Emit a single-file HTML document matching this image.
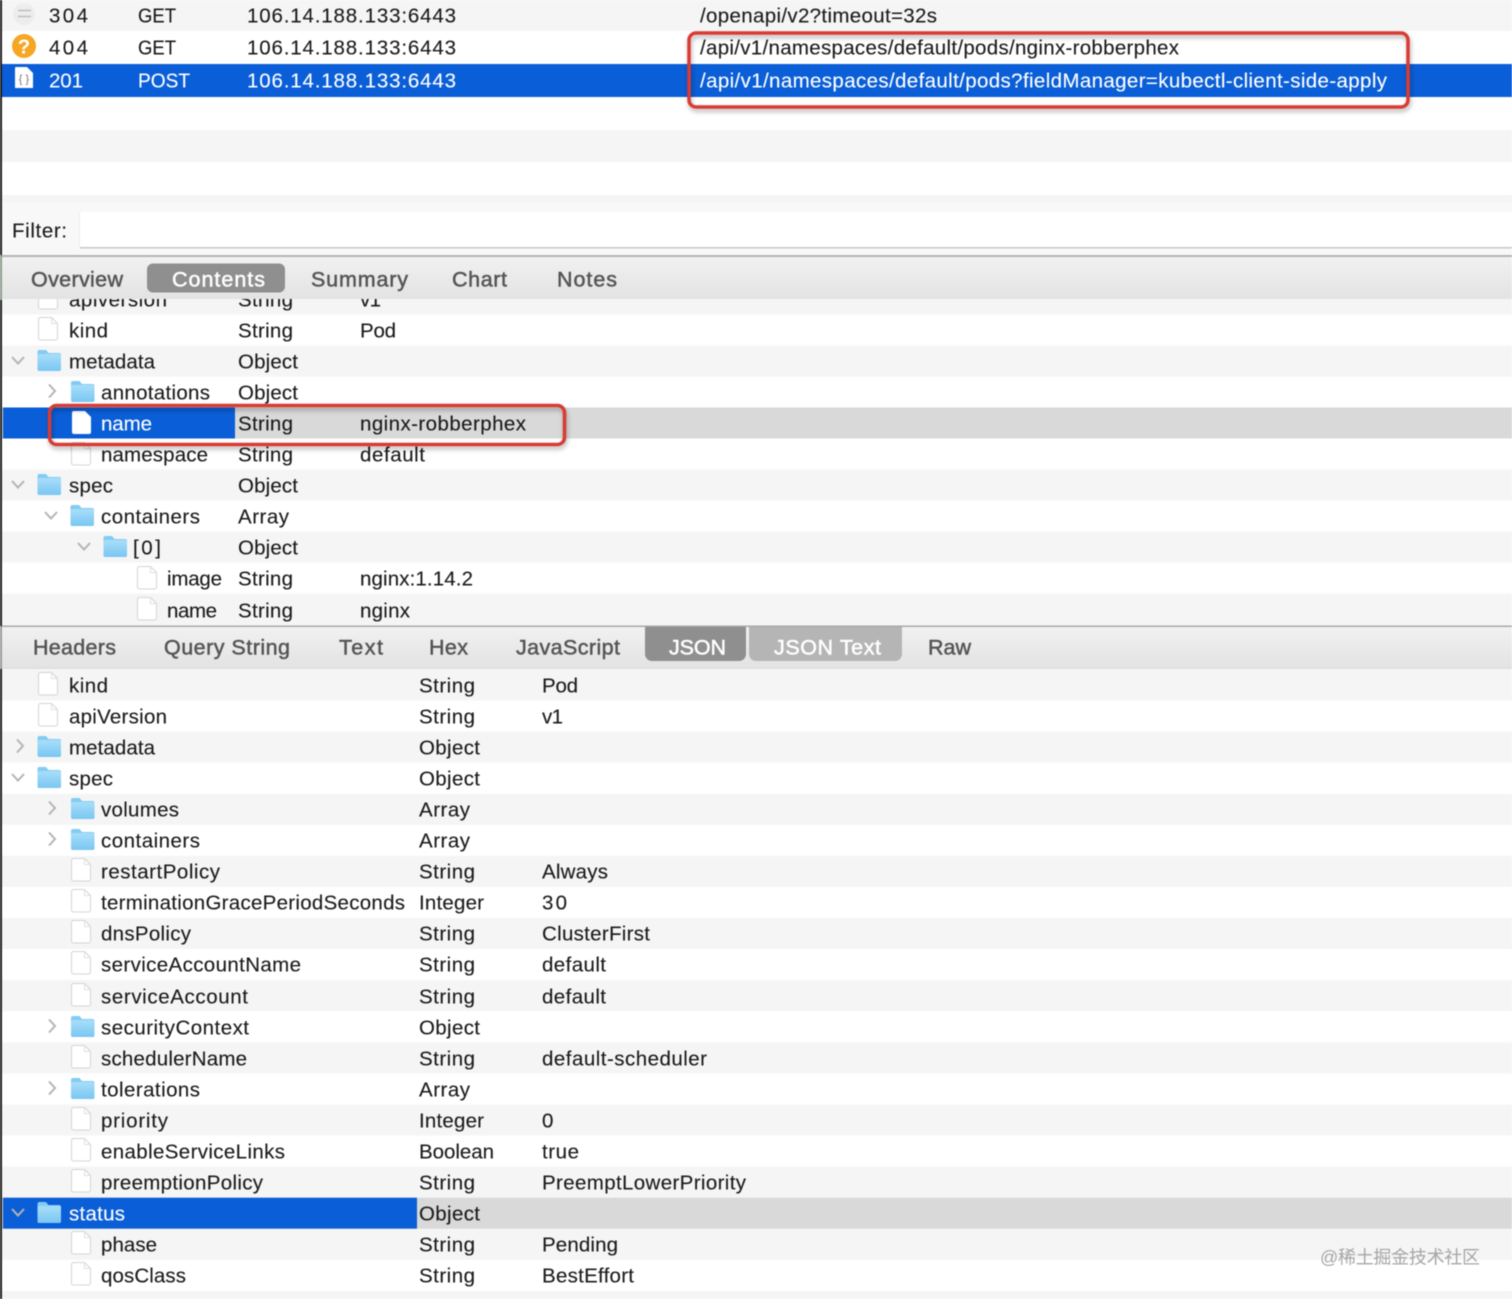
<!DOCTYPE html>
<html><head><meta charset="utf-8"><style>
html,body{margin:0;padding:0;background:#fff;width:1512px;height:1299px;overflow:hidden}
svg{display:block;filter:blur(.4px)}
text{font-family:"Liberation Sans","Noto Sans CJK SC",sans-serif;font-size:20.5px;fill:#1a1a1a;stroke:#1a1a1a;stroke-width:.12px;transform:translateY(.4px)}
.w{fill:#fff;stroke:#fff}
.t{fill:#555;stroke:#555;stroke-width:.5px;font-size:21.5px}
.tw{fill:#fff;stroke:#fff;stroke-width:.5px;font-size:21.5px}
.g{fill:#f5f5f5}
</style></head><body>
<svg xmlns="http://www.w3.org/2000/svg" width="1512" height="1299" viewBox="0 0 1512 1299">
<defs>
<linearGradient id="tb" x1="0" y1="0" x2="0" y2="1"><stop offset="0" stop-color="#f1f1f1"/><stop offset="1" stop-color="#e3e3e3"/></linearGradient>
<linearGradient id="fo" x1="0" y1="0" x2="0" y2="1"><stop offset="0" stop-color="#a9def9"/><stop offset="1" stop-color="#79c6f2"/></linearGradient>
<g id="file"><path d="M.5 2.500a2 2 0 0 1 2-2H13.500L19.500 6.500V21a2 2 0 0 1-2 2H2.500a2 2 0 0 1-2-2Z" fill="#fff" stroke="#d4d4d4"/><path d="M13.500.5V6.500H19.500" fill="none" stroke="#e0e0e0"/></g>
<g id="filew"><path d="M0 2a2 2 0 0 1 2-2H13L19 6V21a2 2 0 0 1-2 2H2a2 2 0 0 1-2-2Z" fill="#fff"/></g>
<g id="folder"><path d="M0 2a2 2 0 0 1 2-2H8.500L11 3H21.500a2 2 0 0 1 2 2V19a2 2 0 0 1-2 2H2a2 2 0 0 1-2-2Z" fill="#82ccf4"/><path d="M0 6a2 2 0 0 1 2-2H21.500a2 2 0 0 1 2 2V19a2 2 0 0 1-2 2H2a2 2 0 0 1-2-2Z" fill="url(#fo)"/></g>
<path id="cd" d="M-6-4L0 2.500L6-4" fill="none" stroke="#b4b4b4" stroke-width="2"/>
<path id="cr" d="M-3-6.500L3 0L-3 6.500" fill="none" stroke="#b4b4b4" stroke-width="2"/>
<filter id="sh" x="-5%" y="-20%" width="110%" height="150%"><feDropShadow dx="1" dy="3" stdDeviation="2.500" flood-color="#000" flood-opacity=".3"/></filter>
</defs>

<!-- top list -->
<rect class="g" y="0" width="1512" height="31"/>
<rect fill="#0a5ed7" y="64" width="1512" height="33"/>
<rect class="g" y="130" width="1512" height="32"/>
<rect class="g" y="195" width="1512" height="8"/>
<rect fill="#f8f8f8" y="203" width="1512" height="52"/>
<circle cx="24" cy="14" r="11" fill="#ededed"/><path d="M18 10.500H31M18 16.500H31" stroke="#bdbdbd" stroke-width="1.500"/>
<circle cx="24" cy="46" r="12" fill="#f5a623"/><text x="24" y="53" text-anchor="middle" class="w" style="font-size:20px;font-weight:bold">?</text>
<path d="M15 68a1 1 0 0 1 1-1H27L33 73V88H15Z" fill="#fff"/><text x="24" y="82" text-anchor="middle" style="font-size:11px;fill:#777;stroke:none">{ }</text>
<text x="49" y="22" textLength="39">304</text><text x="138" y="22" textLength="38" lengthAdjust="spacingAndGlyphs">GET</text><text x="247" y="22" textLength="209">106.14.188.133:6443</text><text x="700" y="22" textLength="237">/openapi/v2?timeout=32s</text>
<text x="49" y="54" textLength="39">404</text><text x="138" y="54" textLength="38" lengthAdjust="spacingAndGlyphs">GET</text><text x="247" y="54" textLength="209">106.14.188.133:6443</text><text x="700" y="54" textLength="479">/api/v1/namespaces/default/pods/nginx-robberphex</text>
<text class="w" x="49" y="87" textLength="34">201</text><text class="w" x="138" y="87" textLength="52" lengthAdjust="spacingAndGlyphs">POST</text><text class="w" x="247" y="87" textLength="209">106.14.188.133:6443</text><text class="w" x="700" y="87" textLength="687">/api/v1/namespaces/default/pods?fieldManager=kubectl-client-side-apply</text>

<!-- filter -->
<text x="12" y="237" textLength="55">Filter:</text>
<rect x="80" y="212" width="1432" height="35" fill="#fff"/><rect x="80" y="247" width="1432" height="1.500" fill="#c9c9c9"/><rect x="79" y="212" width="1" height="35" fill="#ececec"/>

<!-- contents rows -->
<rect class="g" y="283.500" width="1512" height="31"/>
<rect class="g" y="345.500" width="1512" height="31"/>
<rect fill="#d9d9d9" y="407.500" width="1512" height="31"/>
<rect fill="#0a5ed7" x="3" y="407.500" width="232" height="31"/>
<rect class="g" y="469.500" width="1512" height="31"/>
<rect class="g" y="531.500" width="1512" height="31"/>
<rect class="g" y="593.500" width="1512" height="33"/>

<use href="#file" x="38" y="286"/><text x="69" y="306" textLength="98">apiversion</text><text x="238" y="306" textLength="55">String</text><text x="360" y="306" textLength="21">v1</text>
<use href="#file" x="38" y="317"/><text x="69" y="337" textLength="39">kind</text><text x="238" y="337" textLength="55">String</text><text x="360" y="337" textLength="36">Pod</text>
<use href="#cd" x="18" y="361"/><use href="#folder" x="37.500" y="350"/><text x="69" y="368" textLength="86">metadata</text><text x="238" y="368" textLength="60">Object</text>
<use href="#cr" x="52" y="391"/><use href="#folder" x="71" y="381"/><text x="101" y="399" textLength="109">annotations</text><text x="238" y="399" textLength="60">Object</text>
<use href="#filew" x="72" y="411"/><text class="w" x="101" y="430" textLength="51">name</text><text x="238" y="430" textLength="55">String</text><text x="360" y="430" textLength="166">nginx-robberphex</text>
<use href="#file" x="71" y="442"/><text x="101" y="461" textLength="107">namespace</text><text x="238" y="461" textLength="55">String</text><text x="360" y="461" textLength="65">default</text>
<use href="#cd" x="18" y="485"/><use href="#folder" x="37.500" y="474"/><text x="69" y="492" textLength="44">spec</text><text x="238" y="492" textLength="60">Object</text>
<use href="#cd" x="51" y="516"/><use href="#folder" x="70.500" y="505"/><text x="101" y="523" textLength="99">containers</text><text x="238" y="523" textLength="51">Array</text>
<use href="#cd" x="84" y="547"/><use href="#folder" x="103.500" y="536"/><text x="133" y="554" textLength="28">[0]</text><text x="238" y="554" textLength="60">Object</text>
<use href="#file" x="137" y="566"/><text x="167" y="585" textLength="55">image</text><text x="238" y="585" textLength="55">String</text><text x="360" y="585" textLength="113">nginx:1.14.2</text>
<use href="#file" x="137" y="597"/><text x="167" y="617" textLength="50">name</text><text x="238" y="617" textLength="55">String</text><text x="360" y="617" textLength="50">nginx</text>

<!-- tabs 1 -->
<rect y="255" width="1512" height="2" fill="#b4b4b4"/>
<rect y="257" width="1512" height="42" fill="url(#tb)"/>
<rect x="147" y="263.500" width="138" height="29" rx="6" fill="#8f8f8f"/>
<text class="t" x="31" y="286" textLength="92">Overview</text>
<text class="tw" x="172" y="286" textLength="93">Contents</text>
<text class="t" x="311" y="286" textLength="97">Summary</text>
<text class="t" x="452" y="286" textLength="55">Chart</text>
<text class="t" x="557" y="286" textLength="60">Notes</text>

<!-- tabs 2 -->
<rect y="625.500" width="1512" height="1.500" fill="#a9a9a9"/>
<rect y="627" width="1512" height="41" fill="url(#tb)"/>
<rect y="668" width="1512" height="1" fill="#dadada"/>
<path d="M645 627H746V654a7 7 0 0 1-7 7H652a7 7 0 0 1-7-7Z" fill="#8f8f8f"/>
<path d="M749 627H902V654a7 7 0 0 1-7 7H756a7 7 0 0 1-7-7Z" fill="#b5b5b5"/>
<text class="t" x="33" y="654" textLength="83">Headers</text>
<text class="t" x="164" y="654" textLength="126">Query String</text>
<text class="t" x="339" y="654" textLength="44">Text</text>
<text class="t" x="429" y="654" textLength="39">Hex</text>
<text class="t" x="516" y="654" textLength="104">JavaScript</text>
<text class="tw" x="669" y="654" textLength="57">JSON</text>
<text class="tw" x="774" y="654" textLength="107">JSON Text</text>
<text class="t" x="928" y="654" textLength="43">Raw</text>

<!-- bottom rows -->
<rect class="g" y="669.500" width="1512" height="31"/>
<rect class="g" y="731.600" width="1512" height="31"/>
<rect class="g" y="793.800" width="1512" height="31"/>
<rect class="g" y="855.900" width="1512" height="31"/>
<rect class="g" y="918" width="1512" height="31"/>
<rect class="g" y="980.200" width="1512" height="31"/>
<rect class="g" y="1042.300" width="1512" height="31"/>
<rect class="g" y="1104.500" width="1512" height="31"/>
<rect class="g" y="1166.600" width="1512" height="31.100"/>
<rect fill="#d9d9d9" y="1197.700" width="1512" height="31.100"/>
<rect fill="#0a5ed7" x="3" y="1197.700" width="414" height="31.100"/>
<rect class="g" y="1228.800" width="1512" height="31.100"/>
<rect class="g" y="1291" width="1512" height="8"/>

<use href="#file" x="38" y="672"/><text x="69" y="692" textLength="39">kind</text><text x="419" y="692" textLength="56">String</text><text x="542" y="692" textLength="36">Pod</text>
<use href="#file" x="38" y="703"/><text x="69" y="723" textLength="98">apiVersion</text><text x="419" y="723" textLength="56">String</text><text x="542" y="723" textLength="21">v1</text>
<use href="#cr" x="20" y="746"/><use href="#folder" x="37.500" y="736"/><text x="69" y="754" textLength="86">metadata</text><text x="419" y="754" textLength="61">Object</text>
<use href="#cd" x="18" y="778"/><use href="#folder" x="37.500" y="767"/><text x="69" y="785" textLength="44">spec</text><text x="419" y="785" textLength="61">Object</text>
<use href="#cr" x="52" y="808"/><use href="#folder" x="71" y="798"/><text x="101" y="816" textLength="78">volumes</text><text x="419" y="816" textLength="51">Array</text>
<use href="#cr" x="52" y="839"/><use href="#folder" x="71" y="829"/><text x="101" y="847" textLength="99">containers</text><text x="419" y="847" textLength="51">Array</text>
<use href="#file" x="71" y="858"/><text x="101" y="878" textLength="119">restartPolicy</text><text x="419" y="878" textLength="56">String</text><text x="542" y="878" textLength="66">Always</text>
<use href="#file" x="71" y="889"/><text x="101" y="909" textLength="304">terminationGracePeriodSeconds</text><text x="419" y="909" textLength="65">Integer</text><text x="542" y="909" textLength="25">30</text>
<use href="#file" x="71" y="920"/><text x="101" y="940" textLength="90">dnsPolicy</text><text x="419" y="940" textLength="56">String</text><text x="542" y="940" textLength="108">ClusterFirst</text>
<use href="#file" x="71" y="951"/><text x="101" y="971" textLength="200">serviceAccountName</text><text x="419" y="971" textLength="56">String</text><text x="542" y="971" textLength="64">default</text>
<use href="#file" x="71" y="983"/><text x="101" y="1003" textLength="147">serviceAccount</text><text x="419" y="1003" textLength="56">String</text><text x="542" y="1003" textLength="64">default</text>
<use href="#cr" x="52" y="1026"/><use href="#folder" x="71" y="1016"/><text x="101" y="1034" textLength="148">securityContext</text><text x="419" y="1034" textLength="61">Object</text>
<use href="#file" x="71" y="1045"/><text x="101" y="1065" textLength="146">schedulerName</text><text x="419" y="1065" textLength="56">String</text><text x="542" y="1065" textLength="165">default-scheduler</text>
<use href="#cr" x="52" y="1088"/><use href="#folder" x="71" y="1078"/><text x="101" y="1096" textLength="99">tolerations</text><text x="419" y="1096" textLength="51">Array</text>
<use href="#file" x="71" y="1107"/><text x="101" y="1127" textLength="67">priority</text><text x="419" y="1127" textLength="65">Integer</text><text x="542" y="1127" textLength="12">0</text>
<use href="#file" x="71" y="1138"/><text x="101" y="1158" textLength="184">enableServiceLinks</text><text x="419" y="1158" textLength="75">Boolean</text><text x="542" y="1158" textLength="37">true</text>
<use href="#file" x="71" y="1169"/><text x="101" y="1189" textLength="162">preemptionPolicy</text><text x="419" y="1189" textLength="56">String</text><text x="542" y="1189" textLength="204">PreemptLowerPriority</text>
<use href="#cd" x="18" y="1213" style="stroke:#cfe0f7"/><use href="#folder" x="37.500" y="1202"/><text class="w" x="69" y="1220" textLength="56">status</text><text x="419" y="1220" textLength="61">Object</text>
<use href="#file" x="71" y="1231"/><text x="101" y="1251" textLength="56">phase</text><text x="419" y="1251" textLength="56">String</text><text x="542" y="1251" textLength="76">Pending</text>
<use href="#file" x="71" y="1262"/><text x="101" y="1282" textLength="85">qosClass</text><text x="419" y="1282" textLength="56">String</text><text x="542" y="1282" textLength="92">BestEffort</text>

<!-- left edge -->
<rect x="0" y="0" width="2" height="1299" fill="#1a1a1a"/>
<rect x="0" y="255" width="2" height="45" fill="#8a9a8a"/>
<rect x="0" y="626" width="2" height="43" fill="#999"/>

<!-- annotations -->
<rect x="689" y="33" width="719" height="74" rx="7" fill="none" stroke="#d93a32" stroke-width="3.500" filter="url(#sh)"/>
<rect x="49.500" y="405.500" width="515" height="39" rx="7" fill="none" stroke="#d93a32" stroke-width="3.500" filter="url(#sh)"/>

<!-- watermark -->
<text x="1320" y="1263" textLength="160" style="font-size:18px;fill:#a6a6a6;stroke:none">@稀土掘金技术社区</text>
</svg>
</body></html>
